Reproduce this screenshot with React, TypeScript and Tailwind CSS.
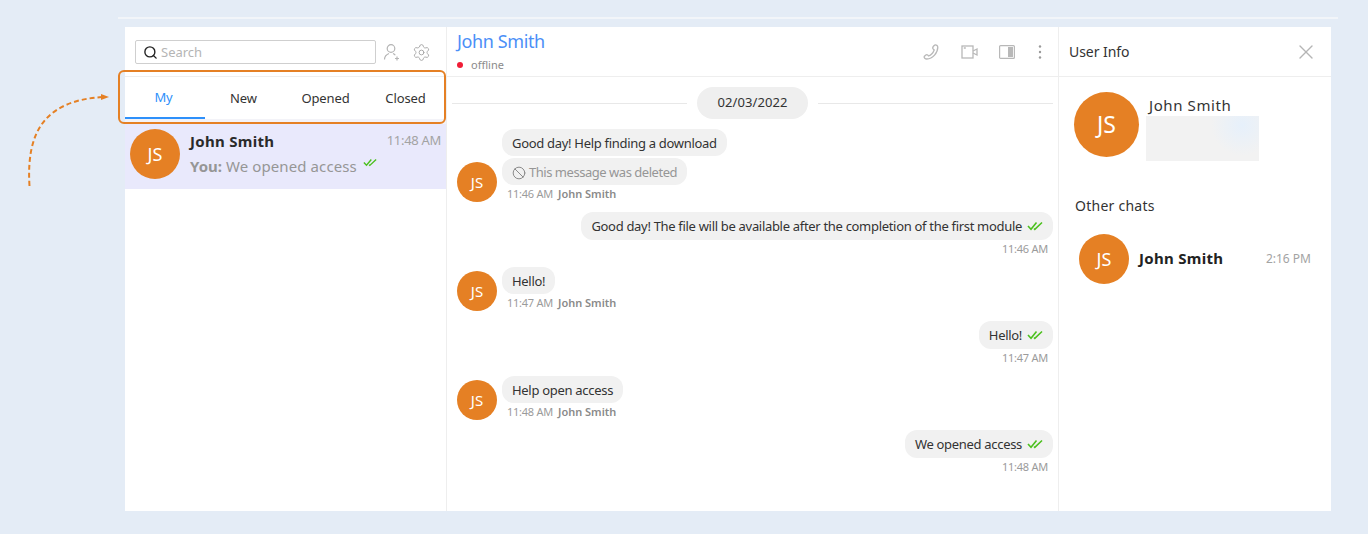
import React from 'react';
import { Search, Settings, Ban, X } from 'lucide-react';

const Avatar = ({ size, text }: { size: string; text: string }) => (
  <div className={`${size} shrink-0 rounded-full bg-[#e58024] text-white flex items-center justify-center`}>{text}</div>
);

const DoubleCheck = ({ className }: { className?: string }) => (
  <svg viewBox="0 0 16 10" fill="none" stroke="#4cc01e" strokeWidth="1.6" className={className}>
    <path d="M1 5l3 3.2L9.500 1.500" />
    <path d="M7 7.500l.8.8L15 1.500" />
  </svg>
);

const Incoming = ({ bubbles, time }: { bubbles: React.ReactNode[]; time: string }) => (
  <div className="flex items-end gap-[5px] pl-[10px]">
    <Avatar size="w-10 h-10 mb-px text-[15px]" text="JS" />
    <div className="flex flex-col items-start gap-[2px]">
      {bubbles.map((b, i) => (
        <div key={i} className="h-[27px] px-[10px] pt-[2px] rounded-[12px] bg-[#f1f1f1] flex items-center text-[13px] tracking-[-0.3px] text-[#333]">{b}</div>
      ))}
      <div className="h-[18px] mt-[-2px] pl-[5px] flex items-center gap-[5px] text-[11px]">
        <span className="text-[#9b9b9b] tracking-[-0.25px]">{time}</span>
        <span className="font-semibold text-[#8a8a8a]">John Smith</span>
      </div>
    </div>
  </div>
);

const Outgoing = ({ text, time }: { text: string; time: string }) => (
  <div className="flex flex-col items-end pr-[5px]">
    <div className="h-[28px] px-[10px] pt-[2px] rounded-[12px] bg-[#f1f1f1] flex items-center gap-[5px] text-[13px] tracking-[-0.31px] text-[#333]">
      {text}
      <DoubleCheck className="w-[16px] h-[10px] mb-[2px]" />
    </div>
    <div className="h-[18px] pr-[5px] flex items-center text-[11px] tracking-[-0.25px] text-[#9b9b9b]">{time}</div>
  </div>
);

export default function App() {
  return (
    <div className="relative h-[534px] overflow-hidden bg-[#e4ecf6] pl-[118px] pr-[30px] pt-[17px] font-['Noto_Sans',sans-serif]">
      <div className="h-[2px] bg-[#f2f5f9]" />
      <div className="mt-[8px] ml-[7px] mr-[7px] h-[484px] bg-white flex">
        {/* chat list */}
        <div className="w-[322px] shrink-0 border-r border-[#eeeeee] flex flex-col">
          <div className="h-[49px] pl-[10px] pt-[13px] flex items-start">
            <div className="w-[241px] h-[24px] border border-[#cfcfcf] rounded-[2px] flex items-center pl-[7px] gap-[3px] text-[13px] text-[#b5b5b5]">
              <Search size={15} color="#222" strokeWidth={2.2} />
              <span className="pt-px">Search</span>
            </div>
            <svg viewBox="0 0 18 18" fill="none" stroke="#b4b4b4" strokeWidth="1.2" className="w-[18px] h-[18px] ml-[7px] mt-[3px]">
              <circle cx="8" cy="5.500" r="3.800" />
              <path d="M1.500 16.500c0-3.500 2-5 4.500-6M10 10.500c1 .4 1.800 1 2.300 1.800M14 13.500v4M12 15.500h4" />
            </svg>
            <Settings size={19} color="#a8a8a8" strokeWidth={1.2} className="ml-[11px] mt-[3px]" />
          </div>
          <div className="h-[1px] bg-[#eeeeee]" />
          <div className="h-[42px] flex text-[13px] tracking-[-0.1px] text-[#333]">
            <div className="w-[80px] border-b-2 border-[#2e90fa] text-[#2e90fa] flex items-center justify-center pr-[3px] pt-[1px]">My</div>
            <div className="w-[80px] flex items-center justify-center pr-[3px] pt-[1px]">New</div>
            <div className="w-[82px] flex items-center justify-center pr-[1px] pt-[1px]">Opened</div>
            <div className="w-[79px] flex items-center justify-center pr-[2px] pt-[1px]">Closed</div>
          </div>
          <div className="h-[5px] bg-[#f3f3f8]" />
          <div className="h-[65px] bg-[#e9e9fc] pl-[5px] pr-[5px] pt-[5px] flex items-start">
            <Avatar size="w-[50px] h-[50px] text-[18px]" text="JS" />
            <div className="ml-[10px] flex-1 min-w-0">
              <div className="flex justify-between items-center h-[24px]">
                <span className="text-[15px] tracking-[0.3px] font-bold text-[#2a2a2a]">John Smith</span>
                <span className="text-[13px] tracking-[-0.3px] text-[#a3a3a3]">11:48 AM</span>
              </div>
              <div className="flex items-center h-[26px] pt-px text-[15px] text-[#969696]">
                <span className="font-bold mr-[4px]">You:</span>
                <span className="tracking-[0.1px]">We opened access</span>
                <DoubleCheck className="w-[14px] h-[9px] ml-[6px] mb-[8px]" />
              </div>
            </div>
          </div>
        </div>

        {/* conversation */}
        <div className="flex-1 min-w-0 flex flex-col border-r border-[#eeeeee]">
          <div className="h-[50px] shrink-0 border-b border-[#eeeeee] pl-[10px] pr-[16px] flex justify-between">
            <div>
              <div className="text-[18px] tracking-[-0.4px] leading-[28px] text-[#4b8ff7]">John Smith</div>
              <div className="flex items-center mt-[3px] text-[11px] leading-[14px] text-[#8b8b8b]">
                <span className="w-[6px] h-[6px] rounded-full bg-[#f01d36] mr-[8px]" />
                offline
              </div>
            </div>
            <div className="flex items-center gap-[14px] mt-[1px]">
              <svg viewBox="0 0 16 16" fill="none" stroke="#b8b8b8" strokeWidth="1.3" className="w-[16px] h-[16px]">
                <path d="M1.200 12.500c1.200-1.400 2.600-2.200 3.400-1.600l1 1.100c2.600-.9 4.600-3.400 5.600-6L9.900 4.600c-.5-1 .5-2.600 2-3.600 1.300-.3 2.800.6 2.900 2 .1 5.700-5.100 11.800-11 12-1.600 0-3-1.400-2.600-2.500z" />
              </svg>
              <svg viewBox="0 0 17 14" fill="none" stroke="#b8b8b8" strokeWidth="1.3" className="w-[17px] h-[14px] ml-[8px]">
                <rect x="1" y="1" width="11" height="12" />
                <path d="M12 6l4-2v6l-4-2M2.800 3h2" />
              </svg>
              <svg viewBox="0 0 16 14" className="w-[16px] h-[14px] ml-[7px]">
                <rect x=".6" y=".6" width="14.800" height="12.800" rx="1" fill="none" stroke="#b8b8b8" strokeWidth="1.2" />
                <rect x="9" y="2" width="5" height="10" fill="#b8b8b8" />
              </svg>
              <svg viewBox="0 0 4 16" className="w-[4px] h-[16px] ml-[9px]" fill="#9a9a9a">
                <circle cx="2" cy="2.500" r="1.200" />
                <circle cx="2" cy="8" r="1.200" />
                <circle cx="2" cy="13.500" r="1.200" />
              </svg>
            </div>
          </div>
          <div className="h-[32px] mt-[10px] shrink-0 flex items-center pl-[5px] pr-[5px] gap-[10px]">
            <div className="flex-1 h-px bg-[#e8e8e8]" />
            <div className="w-[111px] h-[32px] rounded-full bg-[#efefef] flex items-center justify-center text-[13px] tracking-[0.1px] text-[#333]">02/03/2022</div>
            <div className="flex-1 h-px bg-[#e8e8e8]" />
          </div>
          <div className="mt-[10px] flex flex-col gap-[9px]">
            <Incoming
              time="11:46 AM"
              bubbles={[
                'Good day! Help finding a download',
                <span className="flex items-center gap-[3px] tracking-[-0.47px] text-[#969696]">
                  <Ban size={14} color="#8a8a8a" strokeWidth={1.7} />
                  This message was deleted
                </span>,
              ]}
            />
            <Outgoing text="Good day! The file will be available after the completion of the first module" time="11:46 AM" />
            <Incoming time="11:47 AM" bubbles={['Hello!']} />
            <Outgoing text="Hello!" time="11:47 AM" />
            <Incoming time="11:48 AM" bubbles={['Help open access']} />
            <Outgoing text="We opened access" time="11:48 AM" />
          </div>
        </div>

        {/* user info */}
        <div className="w-[272px] shrink-0 flex flex-col">
          <div className="h-[50px] shrink-0 border-b border-[#eeeeee] pl-[10px] pr-[13px] flex items-center justify-between text-[14px] tracking-[-0.05px] text-[#333]">
            User Info
            <X size={24} color="#b5b5b5" strokeWidth={1.4} />
          </div>
          <div className="pl-[15px] pt-[15px] flex">
            <Avatar size="w-[65px] h-[65px] text-[23px]" text="JS" />
            <div className="ml-[7px]">
              <div className="pl-[3px] h-[22px] mt-[2px] text-[15px] tracking-[0.6px] text-[#333]">John Smith</div>
              <div className="w-[113px] h-[45px] bg-[#f2f2f2] bg-[radial-gradient(circle_at_85%_20%,#e6f0fb_0,#f2f2f2_30%)]" />
            </div>
          </div>
          <div className="pl-[16px] mt-[35px] text-[14px] tracking-[0.25px] leading-[20px] text-[#333]">Other chats</div>
          <div className="pl-[20px] pr-[20px] mt-[18px] flex items-center">
            <Avatar size="w-[50px] h-[50px] text-[18px]" text="JS" />
            <span className="ml-[10px] flex-1 text-[15px] tracking-[0.3px] font-bold text-[#222] mb-[2px]">John Smith</span>
            <span className="text-[12px] text-[#a3a3a3]">2:16 PM</span>
          </div>
        </div>
      </div>

      {/* annotation */}
      <div className="absolute left-[118px] top-[70px] w-[328px] h-[54px] rounded-[6px] border-2 border-[#e58024]" />
      <svg className="absolute left-[20px] top-[88px] w-[95px] h-[100px]" viewBox="0 0 95 100" fill="none">
        <path d="M9.500 98C6 42 26 13 82 9" stroke="#e58024" strokeWidth="2" strokeDasharray="5 3" />
        <path d="M81 6l8 3-8 3z" fill="#e58024" />
      </svg>
    </div>
  );
}
